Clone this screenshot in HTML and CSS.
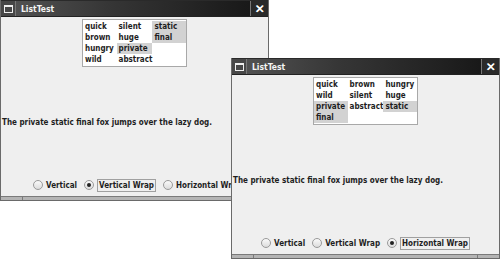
FILE: index.html
```html
<!DOCTYPE html>
<html lang="en">
<head>
    <meta charset="UTF-8">
    <title>ListTest</title>
    <link rel="stylesheet" href="styles.css">
</head>
<body>
    <div class="desktop">
        <div class="window win-back">
            <div class="titlebar">
                <span class="win-icon"><span></span></span>
                <span class="title">ListTest</span>
                <span class="close">&#x2715;</span>
            </div>
            <div class="content">
                <div class="list vertical-wrap">
                    <span>quick</span>
                    <span>brown</span>
                    <span>hungry</span>
                    <span>wild</span>
                    <span>silent</span>
                    <span>huge</span>
                    <span class="sel">private</span>
                    <span>abstract</span>
                    <span class="sel">static</span>
                    <span class="sel">final</span>
                </div>
                <div class="label">The private static final fox jumps over the lazy dog.</div>
                <div class="radios">
                    <span class="radio"><i></i>Vertical</span>
                    <span class="radio on"><i></i><b>Vertical Wrap</b></span>
                    <span class="radio"><i></i>Horizontal Wrap</span>
                </div>
            </div>
            <div class="frame-bottom"><span></span><span></span></div>
        </div>

        <div class="window win-front">
            <div class="titlebar">
                <span class="win-icon"><span></span></span>
                <span class="title">ListTest</span>
                <span class="close">&#x2715;</span>
            </div>
            <div class="content">
                <div class="list horizontal-wrap">
                    <span>quick</span>
                    <span>brown</span>
                    <span>hungry</span>
                    <span>wild</span>
                    <span>silent</span>
                    <span>huge</span>
                    <span class="sel">private</span>
                    <span>abstract</span>
                    <span class="sel">static</span>
                    <span class="sel">final</span>
                </div>
                <div class="label">The private static final fox jumps over the lazy dog.</div>
                <div class="radios">
                    <span class="radio"><i></i>Vertical</span>
                    <span class="radio"><i></i>Vertical Wrap</span>
                    <span class="radio on"><i></i><b>Horizontal Wrap</b></span>
                </div>
            </div>
            <div class="frame-bottom"><span></span><span></span></div>
        </div>
    </div>
</body>
</html>
```

FILE: styles.css
```css
body {
    margin: 0;
    background: #fff;
    font-family: 'DejaVu Sans Condensed', 'DejaVu Sans', sans-serif;
    font-size: 8px;
    font-weight: bold;
    color: #1e1e1e;
}
.desktop {
    position: relative;
    width: 500px;
    height: 261px;
    overflow: hidden;
}
.window {
    position: absolute;
    width: 269px;
    height: 201px;
    display: flex;
    flex-direction: column;
    background: #efefef;
    border-left: 1px solid #6a6a6a;
    border-right: 1px solid #6a6a6a;
    box-sizing: border-box;
    overflow: hidden;
}
.win-back {
    left: 0;
    top: 0;
}
.win-front {
    left: 231px;
    top: 58px;
}
.titlebar {
    height: 17px;
    display: flex;
    align-items: center;
    background: linear-gradient(to right, #555, #363636 40%, #151515);
    border-top: 1px solid #2a2a2a;
    border-bottom: 1px solid #222;
    box-sizing: border-box;
    color: #fff;
}
.win-icon {
    width: 14px;
    height: 15px;
    display: flex;
    align-items: center;
    justify-content: center;
    background: #474747;
    border-right: 1px solid #777;
}
.win-icon span {
    width: 7px;
    height: 5px;
    border: 1px solid #eee;
    border-top-width: 2px;
}
.title {
    flex: 1;
    padding-left: 5px;
    font-size: 8.5px;
    color: #f4f4f4;
}
.close {
    width: 17px;
    height: 15px;
    display: flex;
    align-items: center;
    justify-content: center;
    background: #2a2a2a;
    border-left: 1px solid #777;
    font-family: 'DejaVu Sans', sans-serif;
    font-size: 12px;
    font-weight: bold;
    text-shadow: 0.5px 0 0 #fff;
}
.content {
    flex: 1;
    display: flex;
    flex-direction: column;
    min-height: 0;
}
.list {
    align-self: center;
    margin-top: 2px;
    width: 103px;
    display: grid;
    grid-template-columns: repeat(3, 1fr);
    grid-template-rows: repeat(4, 11px);
    padding: 1px 0;
    background: #fff;
    border: 1px solid #a8a8a8;
}
.vertical-wrap {
    grid-auto-flow: column;
}
.horizontal-wrap {
    grid-auto-flow: row;
}
.list span {
    line-height: 11px;
    padding-left: 2px;
    white-space: nowrap;
}
.list .sel {
    background: #d2d2d2;
}
.label {
    flex: 1;
    display: flex;
    align-items: center;
    padding-left: 1px;
    padding-top: 4px;
    white-space: nowrap;
}
.radios {
    height: 22px;
    display: flex;
    align-items: center;
    justify-content: center;
    gap: 7px;
    white-space: nowrap;
}
.win-back .radios {
    justify-content: flex-start;
    padding-left: 32px;
}
.radio {
    display: flex;
    align-items: center;
    gap: 3px;
}
.radio i {
    width: 8px;
    height: 8px;
    border: 1px solid #9a9a9a;
    border-radius: 50%;
    background: linear-gradient(#fafafa, #dcdcdc);
    position: relative;
}
.radio.on i::after {
    content: "";
    position: absolute;
    left: 2px;
    top: 2px;
    width: 4px;
    height: 4px;
    border-radius: 50%;
    background: #222;
}
.radio b {
    padding: 1px 1px;
    border: 1px solid #a0a0a0;
}
.frame-bottom {
    height: 5px;
    display: flex;
    justify-content: space-between;
    padding: 0 21px;
    background: #b4b4b4;
    border-top: 1px solid #7a7a7a;
    border-bottom: 1px solid #6a6a6a;
    box-sizing: border-box;
}
.frame-bottom span {
    width: 1px;
    background: #7a7a7a;
}
```
